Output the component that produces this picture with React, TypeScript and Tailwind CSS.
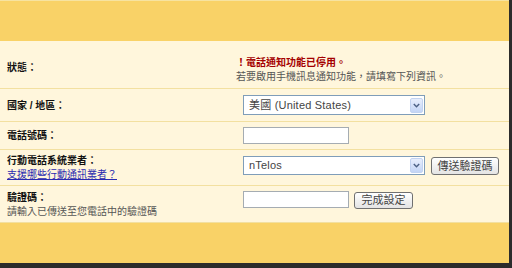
import React from "react";

const font = { fontFamily: '"Liberation Sans", "Noto Sans CJK TC", sans-serif' };

function Select({ value, className }: { value: string; className?: string }) {
  return (
    <div
      className={`flex items-center justify-between border border-[#7f9db9] bg-white pl-[5px] pr-[1px] ${className ?? ""}`}
    >
      <span className="text-[11px] leading-none tracking-[0.2px] text-[#444]">{value}</span>
      <span className="flex h-[15px] w-[13px] items-center justify-center rounded-[2px] border border-[#c3d3f1] bg-gradient-to-b from-[#e8eefc] to-[#c4d5f6]">
        <svg width="7" height="5" viewBox="0 0 7 5">
          <path d="M0.8 1 L3.5 3.8 L6.2 1" fill="none" stroke="#4d6185" strokeWidth="1.4" />
        </svg>
      </span>
    </div>
  );
}

function Button({ label, className }: { label: string; className?: string }) {
  return (
    <div
      className={`flex items-center justify-center rounded-[3px] border border-[#707070] bg-gradient-to-b from-white to-[#e4e4e4] text-[11px] leading-none text-[#444] ${className ?? ""}`}
    >
      {label}
    </div>
  );
}

export default function App() {
  return (
    <div className="flex h-[268px] w-[512px] flex-col bg-[#fff6dc]" style={font}>
      <div className="flex flex-1">
        <div className="flex flex-1 flex-col">
          <div className="h-[41px] border-t border-[#f7e3a0] bg-[#f9d267]" />

          {/* status */}
          <div className="flex h-[48px] border-b border-[#f3e0a0]">
            <div className="w-[236px] pl-[7px] pt-[21px] text-[10px] font-bold leading-[12px] text-[#111]">
              狀態：
            </div>
            <div className="pt-[15px] text-[10px] leading-[14px]">
              <div className="font-bold text-[#a40000]">！電話通知功能已停用。</div>
              <div className="text-[#555]">若要啟用手機訊息通知功能，請填寫下列資訊。</div>
            </div>
          </div>

          {/* country */}
          <div className="flex h-[33px] items-center border-b border-[#f3e0a0]">
            <div className="w-[236px] pl-[7px] text-[10px] font-bold text-[#111]">國家 / 地區：</div>
            <Select value="美國 (United States)" className="ml-[7px] h-[20px] w-[182px]" />
          </div>

          {/* phone */}
          <div className="flex h-[28px] items-center border-b border-[#f3e0a0]">
            <div className="w-[236px] pl-[7px] text-[10px] font-bold text-[#111]">電話號碼：</div>
            <div className="ml-[7px] h-[17px] w-[106px] border border-[#a5acb2] bg-white" />
          </div>

          {/* carrier */}
          <div className="flex h-[36px] border-b border-[#f3e0a0]">
            <div className="w-[236px] pl-[7px] pt-[4px] text-[10px] leading-[14px]">
              <div className="font-bold text-[#111]">行動電話系統業者：</div>
              <div className="text-[#2a2ab0] underline">支援哪些行動通訊業者？</div>
            </div>
            <div className="flex items-start gap-[6px] pl-[7px] pt-[6px]">
              <Select value="nTelos" className="h-[19px] w-[182px]" />
              <Button label="傳送驗證碼" className="mt-[1px] h-[18px] w-[68px]" />
            </div>
          </div>

          {/* code */}
          <div className="flex h-[37px] border-b border-[#f3e0a0]">
            <div className="w-[236px] pl-[7px] pt-[5px] text-[10px] leading-[14px]">
              <div className="font-bold text-[#111]">驗證碼：</div>
              <div className="text-[#555]">請輸入已傳送至您電話中的驗證碼</div>
            </div>
            <div className="flex items-start gap-[5px] pl-[7px] pt-[5px]">
              <div className="h-[17px] w-[106px] border border-[#a5acb2] bg-white" />
              <Button label="完成設定" className="mt-[1px] h-[17px] w-[59px]" />
            </div>
          </div>

          <div className="flex-1 bg-[#f9d267]" />
        </div>
        <div className="w-[3px] bg-[#2c2c2c]" />
      </div>
      <div className="h-[5px] bg-[#2c2c2c]" />
    </div>
  );
}
